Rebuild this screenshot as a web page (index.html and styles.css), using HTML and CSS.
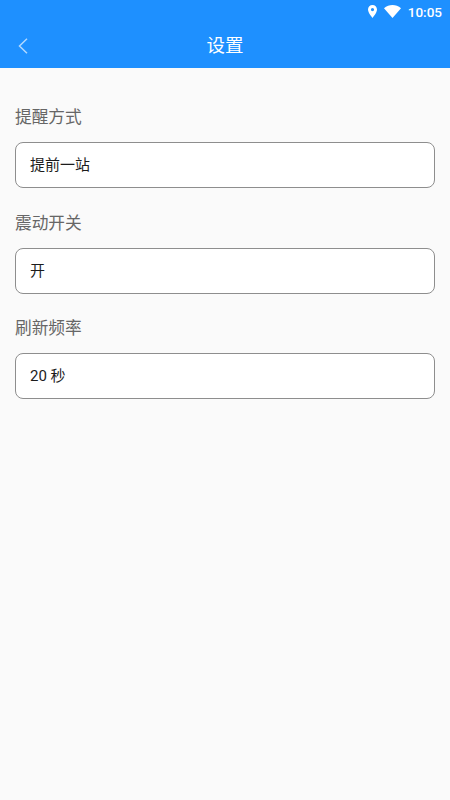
FILE: index.html
```html
<!DOCTYPE html>
<html lang="zh-CN">
<head>
<meta charset="utf-8">
<title>设置</title>
<link rel="stylesheet" href="styles.css">
</head>
<body>
<header class="header">
  <div class="status">
    <svg class="pin" viewBox="5 2 14 20"><path fill="#fff" fill-rule="evenodd" d="M12 2C8.13 2 5 5.13 5 9c0 5.25 7 13 7 13s7-7.75 7-13c0-3.87-3.13-7-7-7zm0 9.500a2.500 2.500 0 1 1 0-5 2.500 2.500 0 0 1 0 5z"/></svg>
    <svg class="wifi" viewBox="0 0 17 13"><path fill="#fff" d="M0 3.200C5-1 12-1 17 3.200L8.500 13z"/></svg>
    <span class="time">10:05</span>
  </div>
  <div class="bar">
    <svg class="back" viewBox="0 0 10 16"><path fill="none" stroke="#fff" stroke-opacity=".65" stroke-width="1.500" d="M9 .7 1.500 8 9 15.300"/></svg>
    <h1 class="title">设置</h1>
  </div>
</header>
<main class="content">
  <section class="field"><h2 class="label">提醒方式</h2><div class="box">提前一站</div></section>
  <section class="field"><h2 class="label">震动开关</h2><div class="box">开</div></section>
  <section class="field"><h2 class="label">刷新频率</h2><div class="box">20 秒</div></section>
</main>
</body>
</html>
```
FILE: styles.css
```css
* { box-sizing: border-box; }
body { margin: 0; min-height: 800px; background: #fafafa; font-family: Roboto, "Noto Sans CJK SC", sans-serif; }
.header { height: 68px; background: #1e90ff; color: #fff; }
.status { height: 23px; display: flex; align-items: center; justify-content: flex-end; padding-right: 8px; }
.pin { width: 9px; height: 13px; margin-right: 7px; }
.wifi { width: 17px; height: 13px; margin-right: 7px; }
.time { font-size: 13.500px; font-weight: 500; line-height: 23px; padding-top: 1px; }
.bar { height: 45px; display: grid; grid-template-columns: 50px 1fr 50px; align-items: center; }
.back { width: 10px; height: 16px; margin-left: 18px; }
.title { margin: 0; font-size: 18.500px; font-weight: 400; text-align: center; height: 45px; line-height: 47px; }
.content { padding: 34px 15px 0; }
.field { height: 105.500px; }
.label { margin: 0 0 8px; height: 32px; line-height: 32px; font-size: 16.700px; font-weight: 400; color: #666; }
.box { height: 46px; border: 1px solid #8e8e8e; border-radius: 8px; background: #fff; color: #1c1c1c; font-size: 15px; line-height: 44px; padding-left: 14px; }
```
